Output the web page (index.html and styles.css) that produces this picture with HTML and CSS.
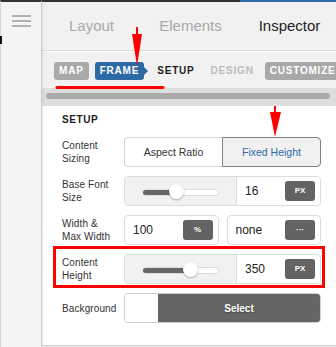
FILE: index.html
```html
<!DOCTYPE html>
<html lang="en">
	<head>
		<meta charset="UTF-8" />
		<meta name="viewport" content="width=device-width, initial-scale=1.0" />
		<title>Inspector</title>
		<link rel="stylesheet" href="styles.css">
	</head>
	<body>
		<div class="app">
			<div class="sidebar">
				<div class="menu-icon">
					<span></span><span></span><span></span>
				</div>
				<span class="edge-mark"></span>
			</div>

			<div class="main">
				<div class="tabs">
					<div class="tab">Layout</div>
					<div class="tab">Elements</div>
					<div class="tab active">Inspector</div>
				</div>

				<div class="subtabs">
					<span class="sub pill">MAP</span>
					<span class="sub pill current">FRAME</span>
					<span class="sub on">SETUP</span>
					<span class="sub off">DESIGN</span>
					<span class="sub pill">CUSTOMIZE</span>
				</div>

				<div class="scroll-track"><div class="scroll-bar"></div></div>

				<div class="panel">
					<h3>SETUP</h3>
					<div class="rows">
						<div class="label">Content Sizing</div>
						<div class="segmented">
							<div class="seg">Aspect Ratio</div>
							<div class="seg selected">Fixed Height</div>
						</div>

						<div class="label">Base Font Size</div>
						<div class="slider-field">
							<div class="slider">
								<div class="track"><div class="fill" style="width: 34px"></div></div>
								<div class="thumb" style="left: 44px"></div>
							</div>
							<div class="value">
								<span>16</span>
								<span class="unit">PX</span>
							</div>
						</div>

						<div class="label">Width &amp; Max Width</div>
						<div class="pair">
							<div class="value boxed">
								<span>100</span>
								<span class="unit">%</span>
							</div>
							<div class="value boxed">
								<span>none</span>
								<span class="unit">&middot;&middot;&middot;</span>
							</div>
						</div>

						<div class="label">Content Height</div>
						<div class="slider-field">
							<div class="slider">
								<div class="track"><div class="fill" style="width: 48px"></div></div>
								<div class="thumb" style="left: 58px"></div>
							</div>
							<div class="value">
								<span>350</span>
								<span class="unit">PX</span>
							</div>
						</div>

						<div class="label">Background</div>
						<div class="picker">
							<div class="swatch"></div>
							<div class="select-btn">Select</div>
						</div>
					</div>
				</div>
			</div>
		</div>

		<!-- red annotations drawn over the screenshot -->
		<svg class="notes" width="336" height="347" viewBox="0 0 336 347">
			<line x1="137" y1="27" x2="137" y2="36" stroke="#f00" stroke-width="2" />
			<polygon points="132,34 142,34 137,66" fill="#f00" />
			<line x1="57" y1="87.5" x2="163" y2="87.5" stroke="#f00" stroke-width="3" stroke-linecap="round" />
			<line x1="275" y1="106" x2="275" y2="114" stroke="#f00" stroke-width="2" />
			<polygon points="270,112 281,112 275,137" fill="#f00" />
		</svg>
		<div class="note-box"></div>
	</body>
</html>
```

FILE: styles.css
```css
body {
	margin: 0;
	font-family: "Liberation Sans", Arial, sans-serif;
	color: #333;
	background: #f1f1f1;
	width: 336px;
	height: 347px;
	overflow: hidden;
	position: relative;
}

.app {
	display: flex;
	height: 347px;
}

.sidebar {
	width: 40px;
	flex-shrink: 0;
	background: #f4f4f4;
	border-left: 1px solid #d6d6d6;
	border-right: 1px solid #cdcdcd;
	border-top: 2px solid #333;
	box-shadow: 1px 0 3px rgba(0,0,0,0.08);
	position: relative;
	z-index: 1;
}

.menu-icon {
	display: flex;
	flex-direction: column;
	gap: 3px;
	width: 19px;
	margin: 13px 0 0 11px;
}

.menu-icon span {
	display: block;
	height: 2px;
	background: #b3b3b3;
}

.edge-mark {
	position: absolute;
	left: -1px;
	top: 34px;
	width: 2px;
	height: 8px;
	background: #111;
}

.main {
	flex: 1;
	display: flex;
	flex-direction: column;
	min-width: 0;
}

.tabs {
	display: grid;
	grid-template-columns: 99px 99px 99px;
	border-bottom: 1px solid #dadada;
	background: #f1f1f1;
}

.tab {
	height: 48px;
	line-height: 48px;
	text-align: center;
	font-size: 15px;
	color: #a9a9a9;
	border-top: 2px solid #333;
}

.tab.active {
	color: #222;
	border-top-color: #2d6aa5;
}

.subtabs {
	display: flex;
	align-items: flex-start;
	gap: 6px;
	padding: 10px 0 0 12px;
	height: 26px;
	border-top: 1px solid #fbfbfb;
}

.sub {
	position: relative;
	height: 18px;
	line-height: 18px;
	padding: 0 5px;
	font-size: 10px;
	font-weight: bold;
	letter-spacing: 0.8px;
	border-radius: 3px;
	white-space: nowrap;
}

.pill {
	background: #a9a9a9;
	color: #fff;
}

.pill.current {
	background: #2d6aa5;
	margin-right: 2px;
}

.pill.current::after {
	content: "";
	position: absolute;
	right: -4px;
	top: 5px;
	border-left: 4px solid #2d6aa5;
	border-top: 4px solid transparent;
	border-bottom: 4px solid transparent;
}

.on {
	color: #1e1e1e;
}

.off {
	color: #bcbcbc;
}

.scroll-track {
	height: 18px;
	background: #dedede;
	padding: 5px 6px 0 4px;
	box-sizing: border-box;
}

.scroll-bar {
	height: 6px;
	border-radius: 3px;
	background: #ababab;
}

.panel {
	width: 268px;
	height: 231px;
	background: #fff;
	border-right: 1px solid #cfcfcf;
	border-bottom: 1px solid #cfcfcf;
	padding: 8px 10px 0 20px;
}

.panel h3 {
	margin: 0;
	font-size: 10px;
	line-height: 12px;
	letter-spacing: 0.6px;
	color: #1e1e1e;
}

.rows {
	display: grid;
	grid-template-columns: 55px 197px;
	grid-auto-rows: 30px;
	column-gap: 7px;
	row-gap: 9px;
	margin-top: 11px;
}

.label {
	align-self: center;
	font-size: 10px;
	line-height: 13px;
	letter-spacing: 0.1px;
	color: #333;
}

.segmented {
	display: flex;
}

.seg {
	flex: 1;
	display: flex;
	align-items: center;
	justify-content: center;
	font-size: 10.5px;
	color: #333;
	border: 1px solid #d4d4d4;
	border-right: none;
	border-radius: 4px 0 0 4px;
	background: #fff;
}

.seg.selected {
	border: 1px solid #808080;
	border-radius: 0 4px 4px 0;
	background: #f1f1f1;
	color: #2d6aa5;
}

.slider-field {
	display: flex;
	border: 1px solid #dcdcdc;
	border-radius: 4px;
	overflow: hidden;
}

.slider {
	position: relative;
	width: 111px;
	background: #f1f1f1;
	border-right: 1px solid #dcdcdc;
}

.track {
	position: absolute;
	left: 17px;
	right: 17px;
	top: 12px;
	height: 5px;
	background: #fff;
	border: 1px solid #dcdcdc;
	border-radius: 4px;
	overflow: hidden;
}

.fill {
	height: 100%;
	background: #666;
}

.thumb {
	position: absolute;
	top: 7px;
	width: 15px;
	height: 15px;
	border-radius: 50%;
	background: #fff;
	box-shadow: 0 1px 2px rgba(0,0,0,0.3);
}

.value {
	flex: 1;
	display: flex;
	align-items: center;
	justify-content: space-between;
	padding: 0 5px 0 8px;
	font-size: 12px;
	color: #222;
	background: #fff;
}

.boxed {
	border: 1px solid #dcdcdc;
	border-radius: 4px;
}

.unit {
	width: 30px;
	height: 20px;
	line-height: 20px;
	text-align: center;
	background: #636363;
	color: #fff;
	font-size: 8px;
	font-weight: bold;
	border-radius: 3px;
}

.pair {
	display: grid;
	grid-template-columns: 1fr 1fr;
	gap: 8px;
}

.picker {
	display: flex;
	border: 1px solid #d0d0d0;
	border-radius: 4px;
	overflow: hidden;
}

.swatch {
	width: 33px;
	background: #fff;
}

.select-btn {
	flex: 1;
	display: flex;
	align-items: center;
	justify-content: center;
	background: #656565;
	color: #fff;
	font-size: 10px;
	font-weight: bold;
	text-shadow: 0 1px 1px rgba(0,0,0,0.3);
}

.notes {
	position: absolute;
	left: 0;
	top: 0;
	pointer-events: none;
}

.note-box {
	position: absolute;
	left: 53px;
	top: 246px;
	width: 272px;
	height: 42px;
	box-sizing: border-box;
	border: 3px solid #f00;
}
```
